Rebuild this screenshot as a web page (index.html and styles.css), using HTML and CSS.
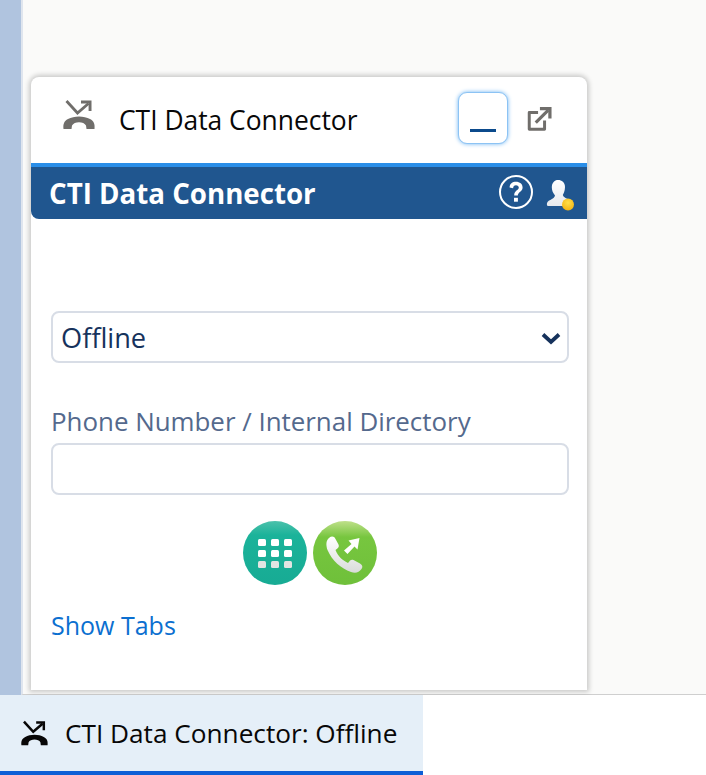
FILE: index.html
```html
<!DOCTYPE html>
<html lang="en">
<head>
<meta charset="utf-8">
<title>CTI Data Connector</title>
<link rel="stylesheet" href="styles.css">
</head>
<body>
<div class="workspace">
  <div class="strip"></div>
  <div class="canvas">
    <section class="panel">
      <header class="panel-head">
        <svg class="head-phone" viewBox="0 0 32 32" width="32" height="32" aria-hidden="true">
          <path d="M3.5 2 L14.5 14 L25.5 4.5" fill="none" stroke="#706e6b" stroke-width="2.8"/>
          <path d="M18 1.5 H28.5 V12 L25.6 12 V4.4 H18 Z" fill="#706e6b"/>
          <path d="M0.5 30 C0 25 1 22 5 20 C11 16.5 21 16.5 27 20 C31 22 32 25 31.5 30 L23.5 30 L23 26.5 C21 22 11 22 9 26.5 L8.5 30 Z" fill="#706e6b"/>
        </svg>
        <span class="head-title">CTI Data Connector</span>
        <button class="min-btn" type="button" aria-label="Minimize"><span class="min-bar"></span></button>
        <svg class="popout" viewBox="0 0 28 28" width="26" height="26" aria-hidden="true">
          <path d="M13 7 H3.5 V25 H20 V15.5" fill="none" stroke="#706e6b" stroke-width="3.2" stroke-linejoin="round"/>
          <path d="M10.5 18 L24 4.5" fill="none" stroke="#706e6b" stroke-width="3.4"/>
          <path d="M15 1 H27.5 V13.5 H24 V4.5 H15 Z" fill="#706e6b"/>
        </svg>
      </header>
      <div class="banner">
        <span class="banner-title">CTI Data Connector</span>
        <svg class="help" viewBox="0 0 36 36" width="36" height="36" aria-hidden="true">
          <circle cx="18" cy="18" r="16" fill="none" stroke="#fff" stroke-width="2"/>
          <path d="M11.6 13.6 C11.6 9.8 14.4 7.8 18 7.8 C21.8 7.8 24.6 10 24.6 13.4 C24.6 17.6 19.8 17.8 19.8 21.6 H16.2 C16.2 16.2 20.8 16.4 20.8 13.8 C20.8 12.2 19.7 11.2 18 11.2 C16.2 11.2 15.2 12.4 15.1 14.2 Z" fill="#fff"/>
          <rect x="16" y="23.8" width="3.9" height="3.9" fill="#fff"/>
        </svg>
        <span class="agent">
          <svg viewBox="0 0 30 32" width="30" height="32" aria-hidden="true">
            <defs>
              <linearGradient id="agentFill" x1="0" y1="0" x2="0" y2="1">
                <stop offset="0" stop-color="#ffffff"/>
                <stop offset="1" stop-color="#e6e9ed"/>
              </linearGradient>
              <radialGradient id="dot" cx="0.5" cy="0.35" r="0.7">
                <stop offset="0" stop-color="#ffdf4a"/>
                <stop offset="1" stop-color="#f2b10f"/>
              </radialGradient>
            </defs>
            <path d="M9.5 1.5 C14 0 19 2.5 19 8 C19 12 17.5 14.6 16.8 16 C17.5 18.5 21 19.5 24 21 V27 H2 C0.5 27 0.6 23.5 2 22.5 C4 20.5 8 20 9 16.5 C7 14 5.8 11.5 5.8 8 C5.8 5 7.5 2.5 9.5 1.5 Z" fill="url(#agentFill)"/>
            <circle cx="22" cy="25.5" r="6" fill="url(#dot)"/>
          </svg>
        </span>
      </div>
      <div class="body">
        <div class="field select">
          <span class="select-value">Offline</span>
          <svg class="chev" viewBox="0 0 20 13" width="20" height="13" aria-hidden="true">
            <path d="M2 2.5 L10 10 L18 2.5" fill="none" stroke="#16325c" stroke-width="3.8"/>
          </svg>
        </div>
        <label class="label" for="phone">Phone Number / Internal Directory</label>
        <input class="field input" id="phone" type="text">
        <div class="actions">
          <button class="round dial" type="button" aria-label="Dial pad">
            <span class="keys">
              <i></i><i></i><i></i><i></i><i></i><i></i><i></i><i></i><i></i>
            </span>
          </button>
          <button class="round call" type="button" aria-label="Call">
            <svg viewBox="0 0 64 64" width="64" height="64" aria-hidden="true">
              <defs>
                <linearGradient id="callFill" x1="0" y1="0" x2="0" y2="1">
                  <stop offset="0" stop-color="#ffffff"/>
                  <stop offset="1" stop-color="#d9dcd9"/>
                </linearGradient>
              </defs>
              <path d="M16 17 C18.5 15 21 15 22.5 18 L25.5 23.5 C26.5 25.5 25.5 27 22.5 29 C25 35 29 39 35 42 C37 39 38.5 38 40.5 39 L47 42.5 C49.5 44 50 46 48.5 48 C46 51.5 42.5 52.5 38 51 C28 47.5 19 39.5 14.5 29 C12.8 24 13 19.5 16 17 Z" fill="url(#callFill)"/>
              <path d="M31 29.5 L38.5 23 L35.5 19.5 L46.5 17 L44.5 28.5 L41.5 25.5 L34.5 33 Z" fill="#fff"/>
            </svg>
          </button>
        </div>
        <a class="show-tabs" href="#">Show Tabs</a>
      </div>
    </section>
  </div>
</div>
<footer class="dock">
  <div class="dock-tab">
    <svg viewBox="0 0 32 32" width="27" height="27" aria-hidden="true">
      <path d="M3.5 2 L14.5 14 L25.5 4.5" fill="none" stroke="#080707" stroke-width="3"/>
      <path d="M18 1.5 H28.5 V12 L25.6 12 V4.4 H18 Z" fill="#080707"/>
      <path d="M0.5 30 C0 25 1 22 5 20 C11 16.5 21 16.5 27 20 C31 22 32 25 31.5 30 L23.5 30 L23 26.5 C21 22 11 22 9 26.5 L8.5 30 Z" fill="#080707"/>
    </svg>
    <span class="dock-label">CTI Data Connector: Offline</span>
  </div>
</footer>
</body>
</html>
```

FILE: styles.css
```css
* { box-sizing: border-box; }
html, body { margin: 0; height: 100%; }
body {
  width: 706px;
  height: 775px;
  overflow: hidden;
  display: flex;
  flex-direction: column;
  font-family: "Open Sans", "Noto Sans", sans-serif;
  background: #fff;
  color: #080707;
}
.workspace { height: 695px; display: flex; flex: none; overflow: hidden; }
.strip { width: 21px; flex: none; background: #b0c4df; }
.canvas {
  flex: 1;
  background: #fafaf9;
  border-left: 2px solid #dfe5ee;
  border-bottom: 1px solid #cfcfcf;
  padding: 77px 0 0 8px;
}
.panel {
  width: 556px;
  height: 613px;
  background: #fff;
  border-radius: 8px 8px 0 0;
  box-shadow: 0 0 5px 2px rgba(0, 0, 0, 0.2);
}
.panel-head {
  height: 86px;
  display: flex;
  align-items: center;
  padding: 0 35px 0 32px;
}
.head-phone { flex: none; margin: -10px 0 0 0; }
.head-title { font-size: 26.4px; margin-left: 24px; flex: 1; line-height: 36px; }
.min-btn {
  width: 50px;
  height: 52px;
  padding: 0;
  margin: 0 18px 4px 0;
  display: flex;
  align-items: flex-end;
  justify-content: center;
  background: #fff;
  border: 1px solid #8cc3f4;
  border-radius: 9px;
  box-shadow: 0 0 4px #6fb5f2;
}
.min-bar { width: 26px; height: 3px; margin-bottom: 11px; background: #0b4a8c; }
.popout { flex: none; margin-bottom: 2px; }
.banner {
  height: 56px;
  display: flex;
  align-items: center;
  padding: 0 11px 0 18px;
  background: #20568f;
  border-top: 4px solid #2a8ee8;
  border-radius: 0 0 0 8px;
  color: #fff;
}
.banner-title { flex: 1; font-size: 27.7px; font-weight: 700; line-height: 36px; }
.help { flex: none; margin-right: 12px; margin-bottom: 2px; }
.agent { flex: none; display: flex; margin-top: 3px; }
.body { padding: 92px 18px 0 20px; }
.field {
  display: block;
  width: 518px;
  height: 52px;
  background: #fff;
  border: 2px solid #d8dde6;
  border-radius: 8px;
}
.select {
  display: flex;
  align-items: center;
  justify-content: space-between;
  padding: 0 6px 0 8px;
}
.select-value { font-size: 27.2px; color: #16325c; }
.chev { flex: none; margin-top: 3px; }
.label {
  display: block;
  margin-top: 40px;
  height: 40px;
  font-size: 25.9px;
  line-height: 36px;
  color: #54698d;
}
.input { outline: 0; padding: 0; }
.actions {
  display: flex;
  justify-content: center;
  gap: 6px;
  margin-top: 26px;
  width: 518px;
}
.round {
  width: 64px;
  height: 64px;
  padding: 0;
  border: 0;
  border-radius: 50%;
  display: flex;
  align-items: center;
  justify-content: center;
}
.dial { background: linear-gradient(#4cc1ab 0, #1bb39a 22%, #17ab94 100%); }
.call { background: linear-gradient(#bfe08a 0, #77c63f 25%, #6fc03a 100%); }
.keys {
  display: grid;
  grid-template-columns: repeat(3, 8.5px);
  grid-auto-rows: 7px;
  gap: 4px 4.5px;
  justify-content: center;
}
.keys i { display: block; background: #fff; border-radius: 1.5px; }
.keys i:nth-child(n+7) { background: #e2e4e2; }
.show-tabs {
  display: block;
  margin-top: 22px;
  font-size: 25px;
  line-height: 36px;
  color: #0b6fd0;
  text-decoration: none;
}
.dock { flex: 1; background: #fff; }
.dock-tab {
  width: 423px;
  height: 80px;
  display: flex;
  align-items: center;
  gap: 17px;
  padding: 0 0 0 21px;
  background: #e5eff8;
  border-bottom: 4px solid #0d5fd6;
}
.dock-label { font-size: 26.2px; line-height: 36px; }
```
